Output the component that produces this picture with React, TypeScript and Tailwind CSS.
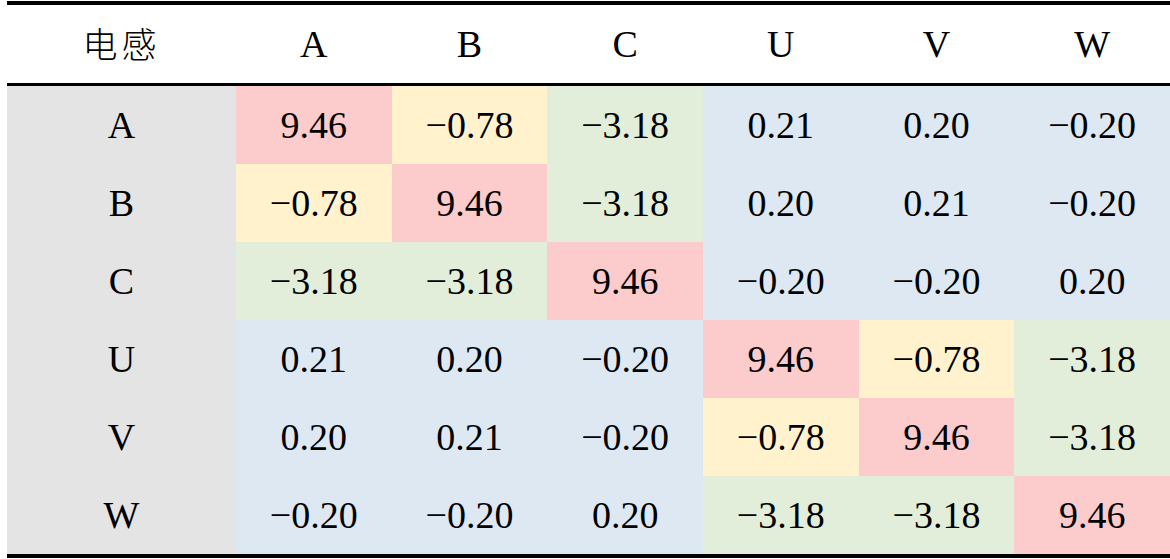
const P = "bg-[#fccbcb]";
const Y = "bg-[#fff2cd]";
const G = "bg-[#e2eed9]";
const B = "bg-[#dde8f3]";

const head = ["A", "B", "C", "U", "V", "W"];

const rows: { name: string; cells: [string, string][] }[] = [
  { name: "A", cells: [["9.46", P], ["−0.78", Y], ["−3.18", G], ["0.21", B], ["0.20", B], ["−0.20", B]] },
  { name: "B", cells: [["−0.78", Y], ["9.46", P], ["−3.18", G], ["0.20", B], ["0.21", B], ["−0.20", B]] },
  { name: "C", cells: [["−3.18", G], ["−3.18", G], ["9.46", P], ["−0.20", B], ["−0.20", B], ["0.20", B]] },
  { name: "U", cells: [["0.21", B], ["0.20", B], ["−0.20", B], ["9.46", P], ["−0.78", Y], ["−3.18", G]] },
  { name: "V", cells: [["0.20", B], ["0.21", B], ["−0.20", B], ["−0.78", Y], ["9.46", P], ["−3.18", G]] },
  { name: "W", cells: [["−0.20", B], ["−0.20", B], ["0.20", B], ["−3.18", G], ["−3.18", G], ["9.46", P]] },
];

export default function App() {
  return (
    <div className="w-[1170px] h-[559px] bg-white pt-px pl-[7px] overflow-hidden font-['Liberation_Serif'] text-[38px] text-black">
      <div className="border-t-4 border-b-4 border-black">
        {/* header */}
        <div className="grid grid-cols-[229px_repeat(6,1fr)] h-[81px] border-b-[3px] border-black">
          <div className="flex items-center justify-center pb-[2px] font-['Noto_Sans_CJK_SC'] font-light text-[35px] tracking-[4px]">
            电感
          </div>
          {head.map((h) => (
            <div key={h} className="flex items-center justify-center">
              {h}
            </div>
          ))}
        </div>

        {/* body */}
        {rows.map((r) => (
          <div key={r.name} className="grid grid-cols-[229px_repeat(6,1fr)] h-[78px]">
            <div className="flex items-center justify-center bg-[#e4e4e4]">{r.name}</div>
            {r.cells.map(([v, c], i) => (
              <div key={i} className={`flex items-center justify-center ${c}`}>
                {v}
              </div>
            ))}
          </div>
        ))}
      </div>
    </div>
  );
}
